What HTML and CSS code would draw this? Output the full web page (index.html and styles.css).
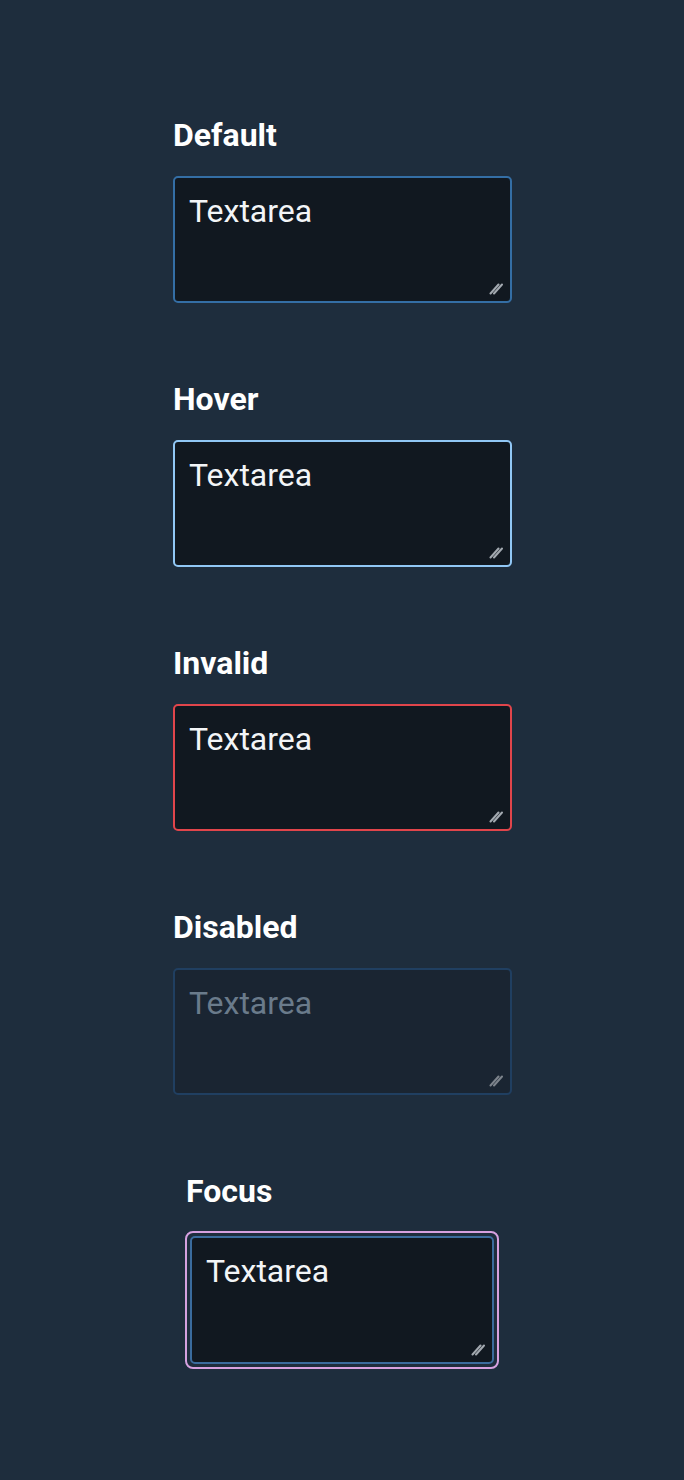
FILE: index.html
```html
<!DOCTYPE html>
<html lang="en">
<head>
<meta charset="utf-8">
<title>Textarea states</title>
<link rel="stylesheet" href="styles.css">
</head>
<body>
<main class="stack">
  <section class="field">
    <label class="label" for="t1">Default</label>
    <div class="ta-wrap">
      <textarea id="t1" class="ta">Textarea</textarea>
      <svg class="grip" viewBox="0 0 14 13" width="14" height="13" aria-hidden="true"><path d="M1.5 11.5 L9.5 2.5 M5 11.5 L13 2.5"/></svg>
    </div>
  </section>
  <section class="field">
    <label class="label" for="t2">Hover</label>
    <div class="ta-wrap">
      <textarea id="t2" class="ta is-hover">Textarea</textarea>
      <svg class="grip" viewBox="0 0 14 13" width="14" height="13" aria-hidden="true"><path d="M1.5 11.5 L9.5 2.5 M5 11.5 L13 2.5"/></svg>
    </div>
  </section>
  <section class="field">
    <label class="label" for="t3">Invalid</label>
    <div class="ta-wrap">
      <textarea id="t3" class="ta is-invalid">Textarea</textarea>
      <svg class="grip" viewBox="0 0 14 13" width="14" height="13" aria-hidden="true"><path d="M1.5 11.5 L9.5 2.5 M5 11.5 L13 2.5"/></svg>
    </div>
  </section>
  <section class="field">
    <label class="label" for="t4">Disabled</label>
    <div class="ta-wrap">
      <textarea id="t4" class="ta is-disabled" disabled>Textarea</textarea>
      <svg class="grip grip-dim" viewBox="0 0 14 13" width="14" height="13" aria-hidden="true"><path d="M1.5 11.5 L9.5 2.5 M5 11.5 L13 2.5"/></svg>
    </div>
  </section>
  <section class="field field-focus">
    <label class="label" for="t5">Focus</label>
    <div class="focus-ring">
      <div class="ta-wrap ta-wrap-focus">
        <textarea id="t5" class="ta is-focus">Textarea</textarea>
        <svg class="grip" viewBox="0 0 14 13" width="14" height="13" aria-hidden="true"><path d="M1.5 11.5 L9.5 2.5 M5 11.5 L13 2.5"/></svg>
      </div>
    </div>
  </section>
</main>
</body>
</html>
```

FILE: styles.css
```css
html, body {
  margin: 0;
  padding: 0;
  background: #1e2d3d;
}

body {
  font-family: Roboto, "Liberation Sans", sans-serif;
  color: #f3f5f7;
  min-height: 1480px;
}

.stack {
  display: flex;
  flex-direction: column;
  gap: 78px;
  padding: 117px 0 0 173px;
}

.field {
  display: flex;
  flex-direction: column;
  align-items: flex-start;
}

.label {
  font-size: 32px;
  font-weight: 700;
  line-height: 36px;
  margin-bottom: 23px;
  color: #ffffff;
}

.ta-wrap {
  position: relative;
  width: 339px;
  height: 127px;
}

.ta {
  box-sizing: border-box;
  display: block;
  width: 100%;
  height: 100%;
  margin: 0;
  padding: 14px 14px;
  font-family: Roboto, "Liberation Sans", sans-serif;
  font-size: 32px;
  line-height: 38px;
  color: #f3f5f7;
  background: #111820;
  border: 2px solid #346ea5;
  border-radius: 5px;
  resize: none;
  overflow: hidden;
  outline: none;
}

.ta.is-hover {
  border-color: #91c7f5;
}

.ta.is-invalid {
  border-color: #e1454b;
}

.ta.is-disabled {
  background: #1a2532;
  border-color: #203f61;
  color: #6a7b8b;
  -webkit-text-fill-color: #6a7b8b;
  opacity: 1;
}

.grip {
  position: absolute;
  right: 9px;
  bottom: 8px;
  fill: none;
  stroke: #a3a9b0;
  stroke-width: 2;
  stroke-linecap: round;
}

.grip-dim {
  stroke: #7d848c;
}

.field-focus {
  margin-left: 12px;
}

.field-focus .label {
  margin-left: 1px;
  margin-bottom: 22px;
}

.focus-ring {
  border: 2px solid #d6a1e0;
  border-radius: 8px;
  padding: 3px;
}

.ta-wrap-focus {
  width: 304px;
  height: 128px;
}

.ta.is-focus {
  border-color: #3a6b9d;
}
```
